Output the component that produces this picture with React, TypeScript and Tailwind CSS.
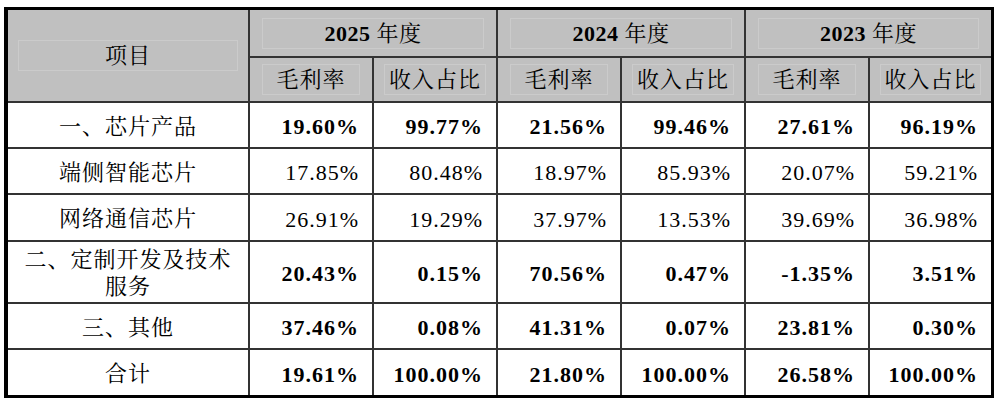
const font = "font-['Liberation_Serif','Noto_Serif_CJK_SC','Noto_Sans_CJK_SC',serif]"

type Row = {
  label: React.ReactNode
  values: string[]
  bold: boolean
  h: string
}

const rows: Row[] = [
  { label: '一、芯片产品', values: ['19.60%', '99.77%', '21.56%', '99.46%', '27.61%', '96.19%'], bold: true, h: 'h-[46px]' },
  { label: '端侧智能芯片', values: ['17.85%', '80.48%', '18.97%', '85.93%', '20.07%', '59.21%'], bold: false, h: 'h-[46px]' },
  { label: '网络通信芯片', values: ['26.91%', '19.29%', '37.97%', '13.53%', '39.69%', '36.98%'], bold: false, h: 'h-[47px]' },
  {
    label: (
      <>
        二、定制开发及技术
        <br />
        服务
      </>
    ),
    values: ['20.43%', '0.15%', '70.56%', '0.47%', '-1.35%', '3.51%'],
    bold: true,
    h: 'h-[62px]',
  },
  { label: '三、其他', values: ['37.46%', '0.08%', '41.31%', '0.07%', '23.81%', '0.30%'], bold: true, h: 'h-[46px]' },
  { label: '合计', values: ['19.61%', '100.00%', '21.80%', '100.00%', '26.58%', '100.00%'], bold: true, h: 'h-[45px]' },
]

const years = ['2025', '2024', '2023']
const line = 'border-[#333]'

export default function App() {
  return (
    <div className={`w-[1000px] h-[406px] bg-white pt-[7px] pl-[4px] text-black ${font}`}>
      <div className="w-[990px] border-t-[3px] border-l-4 border-r-[3px] border-b-[3px] border-black">
        <div className="grid grid-cols-[242px_124px_124px_124px_124px_124px_121px] grid-rows-[48px_45px]">
          <div className={`row-span-2 bg-[#c0c0c0] border-r-2 border-b-2 ${line} flex items-center px-[10px]`}>
            <div className="w-full border border-[#cbcbcb] h-[31px] flex items-center justify-center text-[22px] tracking-[1px]">
              项目
            </div>
          </div>
          {years.map((y, i) => (
            <div
              key={y}
              className={`col-span-2 bg-[#c0c0c0] border-b-2 ${i < 2 ? 'border-r-2' : ''} ${line} flex items-center px-[12px]`}
            >
              <div className="w-full h-[31px] border border-[#cbcbcb] flex items-center justify-center text-[22px] tracking-[0.5px]">
                <span className="font-bold">{y}</span>
                <span className="ml-[6px]">年度</span>
              </div>
            </div>
          ))}
          {years.map((y, i) => (
            <div key={y} className="contents">
              <div className={`bg-[#c0c0c0] border-b-2 border-r-2 ${line} flex items-center px-[12px]`}>
                <div className="w-full h-[31px] border border-[#cbcbcb] flex items-center justify-center text-[22px] tracking-[1px]">
                  毛利率
                </div>
              </div>
              <div className={`bg-[#c0c0c0] border-b-2 ${i < 2 ? 'border-r-2' : ''} ${line} flex items-center px-[10px]`}>
                <div className="w-full h-[31px] border border-[#cbcbcb] flex items-center justify-center text-[22px] tracking-[1px]">
                  收入占比
                </div>
              </div>
            </div>
          ))}
        </div>

        {rows.map((r, ri) => (
          <div
            key={ri}
            className={`grid grid-cols-[242px_124px_124px_124px_124px_124px_121px] ${r.h} ${
              ri < rows.length - 1 ? `border-b-2 ${line}` : ''
            }`}
          >
            <div className={`border-r-2 ${line} flex items-center justify-center text-center pt-[2px] text-[22px] leading-[27px] tracking-[1px]`}>
              <span>{r.label}</span>
            </div>
            {r.values.map((v, vi) => (
              <div
                key={vi}
                className={`${vi < 5 ? 'border-r-2' : ''} ${line} flex items-center justify-end pr-[13px] pt-[3px] text-[22px] tracking-[1px] ${
                  r.bold ? 'font-bold' : ''
                }`}
              >
                {v}
              </div>
            ))}
          </div>
        ))}
      </div>
    </div>
  )
}
